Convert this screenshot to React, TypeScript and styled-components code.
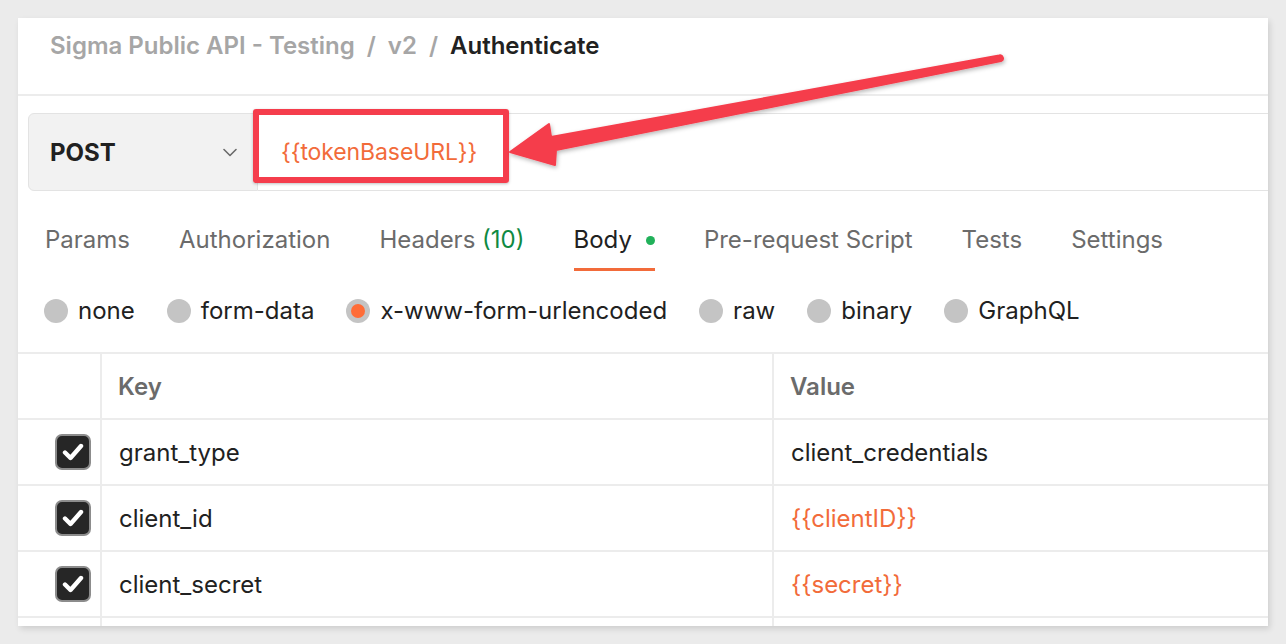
import React from "react";
import styled, { createGlobalStyle } from "styled-components";

const GlobalStyle = createGlobalStyle`
  html, body {
    margin: 0;
    padding: 0;
    background: #ebebeb;
    font-family: Inter, "Noto Sans", "Liberation Sans", sans-serif;
  }
  * { box-sizing: border-box; }
`;

const ORANGE = "#f26b3a";
const RED = "#f53d4c";

const Page = styled.div`
  position: relative;
  width: 1286px;
  height: 644px;
  padding: 18px 18px 0 18px;
  overflow: hidden;
`;

const Card = styled.div`
  width: 1250px;
  height: 608px;
  background: #ffffff;
  overflow: hidden;
  box-shadow: 2px 3px 6px rgba(0, 0, 0, 0.12);
`;

const Breadcrumb = styled.div`
  height: 78px;
  padding: 14px 0 0 32px;
  border-bottom: 2px solid #ececec;
  display: flex;
  align-items: flex-start;
  gap: 12px;
  font-size: 24px;
  line-height: 28px;
  font-weight: 600;
  color: #a6a6a6;
`;

const Crumb = styled.span<{ $current?: boolean }>`
  color: ${(p) => (p.$current ? "#212121" : "#a6a6a6")};
`;

const UrlRow = styled.div`
  margin: 17px 0 0 10px;
  display: flex;
  height: 78px;
`;

const MethodBox = styled.div`
  width: 230px;
  flex: none;
  background: #f2f2f2;
  border: 1px solid #e3e3e3;
  border-radius: 6px 0 0 6px;
  display: flex;
  align-items: center;
  justify-content: space-between;
  padding: 0 20px 0 21px;
  font-size: 24px;
  font-weight: 700;
  color: #212121;
`;

const UrlInput = styled.div`
  flex: 1;
  border-top: 1px solid #e3e3e3;
  border-bottom: 1px solid #e3e3e3;
  display: flex;
  align-items: center;
  padding-left: 23px;
  font-size: 23px;
  letter-spacing: -0.1px;
  color: ${ORANGE};
`;

const TabBar = styled.div`
  display: flex;
  gap: 49px;
  padding: 35px 0 0 27px;
`;

const Tab = styled.div<{ $active?: boolean }>`
  display: flex;
  align-items: center;
  font-size: 24px;
  line-height: 28px;
  padding-bottom: 14px;
  border-bottom: 3px solid ${(p) => (p.$active ? ORANGE : "transparent")};
  color: ${(p) => (p.$active ? "#212121" : "#6b6b6b")};
`;

const Count = styled.span`
  color: #0f8a42;
`;

const Dot = styled.span`
  width: 9px;
  height: 9px;
  border-radius: 50%;
  background: #21b15a;
  margin-left: 14px;
`;

const RadioRow = styled.div`
  display: flex;
  align-items: center;
  gap: 32px;
  padding: 0 0 0 26px;
  margin-top: 26px;
  height: 28px;
  margin-bottom: 27px;
`;

const RadioItem = styled.label`
  display: flex;
  align-items: center;
  gap: 10px;
  font-size: 24px;
  line-height: 28px;
  color: #212121;
`;

const RadioCircle = styled.span<{ $checked?: boolean }>`
  width: 24px;
  height: 24px;
  border-radius: 50%;
  background: #c4c4c4;
  display: flex;
  align-items: center;
  justify-content: center;
  &::after {
    content: "";
    width: 14px;
    height: 14px;
    border-radius: 50%;
    background: ${(p) => (p.$checked ? "#ff6c37" : "transparent")};
  }
`;

const Table = styled.div`
  border-top: 2px solid #ececec;
`;

const Row = styled.div`
  display: grid;
  grid-template-columns: 82px 672px 1fr;
  height: 66px;
  border-bottom: 2px solid #ececec;
`;

const Cell = styled.div<{ $header?: boolean; $variable?: boolean }>`
  display: flex;
  align-items: center;
  padding-left: ${(p) => (p.$header ? 16 : 17)}px;
  border-left: 2px solid #ececec;
  font-size: 24px;
  font-weight: ${(p) => (p.$header ? 600 : 400)};
  color: ${(p) => (p.$header ? "#6b6b6b" : p.$variable ? ORANGE : "#212121")};
`;

const CheckCell = styled.div`
  display: flex;
  align-items: center;
  justify-content: flex-end;
  padding-right: 9px;
`;

const CheckBox = styled.span`
  width: 36px;
  height: 36px;
  border-radius: 7px;
  background: #262626;
  border: 2px solid #8c8c8c;
  display: flex;
  align-items: center;
  justify-content: center;
`;

const Highlight = styled.div`
  position: absolute;
  left: 253px;
  top: 109px;
  width: 256px;
  height: 74px;
  border: 6px solid ${RED};
  border-radius: 3px;
  box-shadow: 0 1px 3px rgba(0, 0, 0, 0.25);
  pointer-events: none;
`;

const ArrowLayer = styled.svg`
  position: absolute;
  left: 0;
  top: 0;
  pointer-events: none;
`;

const Chevron = () => (
  <svg width="14" height="9" viewBox="0 0 14 9" fill="none">
    <path d="M1 1.5 L7 7.5 L13 1.5" stroke="#6b6b6b" strokeWidth="1.6" strokeLinecap="round" strokeLinejoin="round" />
  </svg>
);

const CheckMark = () => (
  <svg width="22" height="18" viewBox="0 0 22 18" fill="none">
    <path d="M3 9.5 L8.5 15 L19 3" stroke="#ffffff" strokeWidth="4.4" strokeLinecap="round" strokeLinejoin="round" />
  </svg>
);

const rows = [
  { key: "grant_type", value: "client_credentials", variable: false },
  { key: "client_id", value: "{{clientID}}", variable: true },
  { key: "client_secret", value: "{{secret}}", variable: true },
];

const radios = [
  { label: "none" },
  { label: "form-data" },
  { label: "x-www-form-urlencoded", checked: true },
  { label: "raw" },
  { label: "binary" },
  { label: "GraphQL" },
];

export default function App() {
  return (
    <>
      <GlobalStyle />
      <Page>
        <Card>
          <Breadcrumb>
            <Crumb>Sigma Public API - Testing</Crumb>
            <Crumb>/</Crumb>
            <Crumb>v2</Crumb>
            <Crumb>/</Crumb>
            <Crumb $current>Authenticate</Crumb>
          </Breadcrumb>
          <UrlRow>
            <MethodBox>
              <span>POST</span>
              <Chevron />
            </MethodBox>
            <UrlInput>{"{{tokenBaseURL}}"}</UrlInput>
          </UrlRow>
          <TabBar>
            <Tab>Params</Tab>
            <Tab>Authorization</Tab>
            <Tab>
              <span>
                Headers <Count>(10)</Count>
              </span>
            </Tab>
            <Tab $active>
              Body
              <Dot />
            </Tab>
            <Tab>Pre-request Script</Tab>
            <Tab>Tests</Tab>
            <Tab>Settings</Tab>
          </TabBar>
          <RadioRow>
            {radios.map((r) => (
              <RadioItem key={r.label}>
                <RadioCircle $checked={r.checked} />
                {r.label}
              </RadioItem>
            ))}
          </RadioRow>
          <Table>
            <Row>
              <CheckCell />
              <Cell $header>Key</Cell>
              <Cell $header>Value</Cell>
            </Row>
            {rows.map((r) => (
              <Row key={r.key}>
                <CheckCell>
                  <CheckBox>
                    <CheckMark />
                  </CheckBox>
                </CheckCell>
                <Cell>{r.key}</Cell>
                <Cell $variable={r.variable}>{r.value}</Cell>
              </Row>
            ))}
            <Row>
              <CheckCell />
              <Cell />
              <Cell />
            </Row>
          </Table>
        </Card>
        <Highlight />
        <ArrowLayer width="1286" height="644" viewBox="0 0 1286 644">
          <defs>
            <filter id="arrowShadow" x="-10%" y="-50%" width="120%" height="200%">
              <feDropShadow dx="1" dy="2" stdDeviation="2" floodColor="#000" floodOpacity="0.28" />
            </filter>
          </defs>
          <path
            d="M510 152 L549 124 L551 137 L999 55.5 A2.8 2.8 0 0 1 1001 61 L556 150 L555 165 Z"
            fill={RED}
            stroke={RED}
            strokeWidth="2"
            strokeLinejoin="round"
            filter="url(#arrowShadow)"
          />
        </ArrowLayer>
      </Page>
    </>
  );
}
